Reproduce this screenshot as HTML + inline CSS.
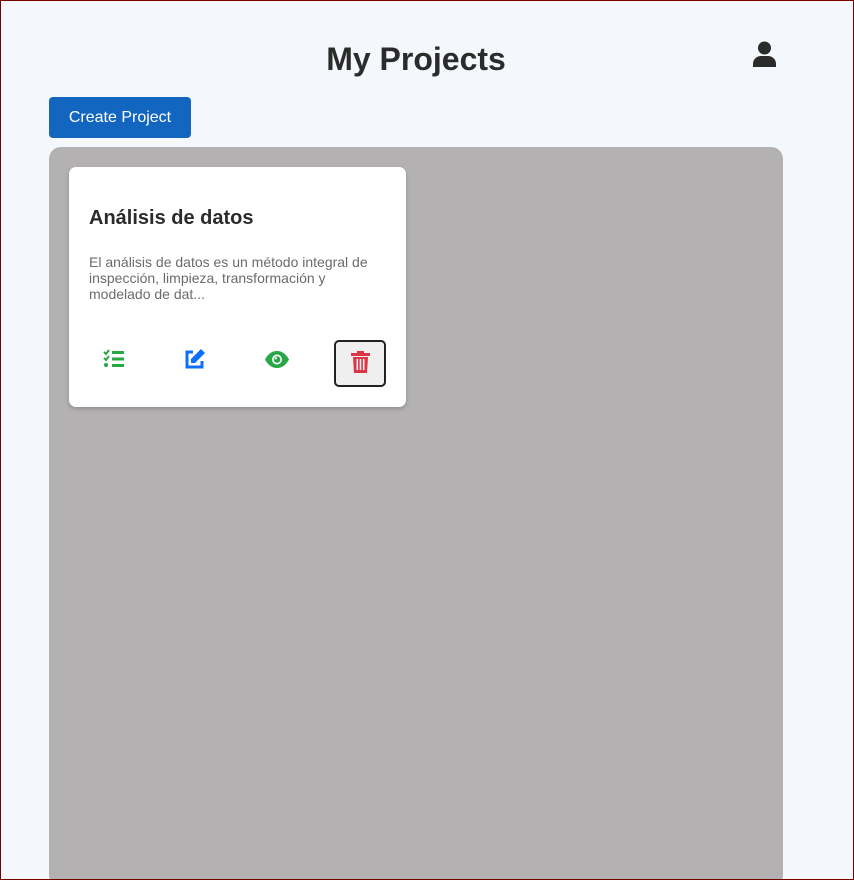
<!DOCTYPE html>
<html><head><style>
*{box-sizing:border-box;margin:0;padding:0}
html,body{width:854px;height:880px;overflow:hidden}
body{background:#f4f7fb;font-family:"Liberation Sans",sans-serif;position:relative}
.frame{position:absolute;left:0;top:0;width:854px;height:880px;border:1px solid #7a0000;pointer-events:none;z-index:9}
h1{position:absolute;left:0;width:832px;text-align:center;top:41px;font-size:32px;color:#2b2b2b;font-weight:bold}
.user{position:absolute;left:753px;top:41px}
.btn{position:absolute;left:49px;top:97px;width:142px;height:41px;background:#1266c0;color:#fff;border-radius:4px;font-size:16px;line-height:41px;text-align:center}
.panel{position:absolute;left:49px;top:147px;width:734px;height:740px;background:#b3b1b2;border-radius:12px}
.card{position:absolute;left:69px;top:167px;width:337px;height:240px;background:#fff;border-radius:7px;box-shadow:0 2px 4px rgba(0,0,0,.2)}
.card h2{position:absolute;left:20px;top:40px;font-size:20px;color:#2b2b2b}
.card p{position:absolute;left:20px;top:87px;width:300px;font-size:14px;line-height:16px;color:#6b6b6b}
.ic{position:absolute;top:182px}
.del{position:absolute;left:265px;top:173px;width:52px;height:47px;border:2px solid #222;border-radius:5px;background:#efefef}
</style></head><body>
<div class="frame"></div>
<h1>My Projects</h1>
<svg class="user" width="23" height="26" viewBox="0 0 23 26"><circle cx="11.5" cy="7" r="6.5" fill="#2b2b2b"/><path d="M0 26v-3c0-5 4-8 8-8h7c4 0 8 3 8 8v3z" fill="#2b2b2b"/></svg>
<div class="btn">Create Project</div>
<div class="panel"></div>
<div class="card">
<h2>Análisis de datos</h2>
<p>El análisis de datos es un método integral de inspección, limpieza, transformación y modelado de dat...</p>
<svg class="ic" style="left:34px" width="22" height="20" viewBox="0 0 22 20"><path d="M1 3l2 2 3-4M1 9l2 2 3-4" stroke="#28a745" stroke-width="2" fill="none"/><circle cx="3" cy="16" r="2" fill="#28a745"/><rect x="9" y="2" width="12" height="3" fill="#28a745"/><rect x="9" y="8.5" width="12" height="3" fill="#28a745"/><rect x="9" y="15" width="12" height="3" fill="#28a745"/></svg>
<svg class="ic" style="left:115px;top:181px" width="22" height="22" viewBox="0 0 22 22"><path d="M9 4H3v15h15v-6" stroke="#0d6efd" stroke-width="3" fill="none"/><path d="M17 1l4 4-10 10H7v-4z" fill="#0d6efd"/></svg>
<svg class="ic" style="left:196px;top:184px" width="24" height="17" viewBox="0 0 24 17"><path d="M0 8.5C3 3 7 0 12 0s9 3 12 8.5C21 14 17 17 12 17S3 14 0 8.5z" fill="#28a745"/><circle cx="12" cy="8.5" r="5" fill="#fff"/><circle cx="12" cy="8.5" r="3.3" fill="#28a745"/><circle cx="10.8" cy="7.3" r="1.2" fill="#fff"/></svg>
<div class="del"><svg style="position:absolute;left:15px;top:9px" width="19" height="22" viewBox="0 0 19 22"><rect x="0" y="2" width="19" height="3" fill="#dc3545"/><rect x="6" y="0" width="7" height="3" fill="#dc3545"/><path d="M2 6h15l-1 16H3z" fill="#dc3545"/><rect x="5.5" y="8" width="1.6" height="11" fill="#efefef"/><rect x="8.7" y="8" width="1.6" height="11" fill="#efefef"/><rect x="11.9" y="8" width="1.6" height="11" fill="#efefef"/></svg></div>
</div>
</body></html>
